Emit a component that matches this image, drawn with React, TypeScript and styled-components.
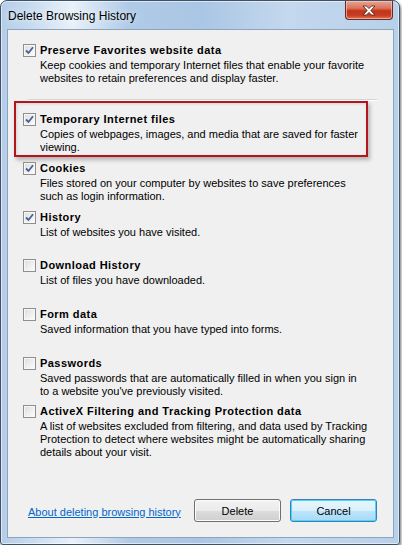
import React from "react";
import styled, { createGlobalStyle } from "styled-components";

const GlobalStyle = createGlobalStyle`
    html, body {
        margin: 0;
        padding: 0;
        background: #ffffff;
    }
    body {
        font-family: "Liberation Sans", Arial, sans-serif;
    }
`;

const Window = styled.div`
    box-sizing: border-box;
    width: 400px;
    height: 545px;
    display: flex;
    flex-direction: column;
    border: 1px solid #3e5268;
    border-radius: 7px 7px 3px 3px;
    background: linear-gradient(
        to right,
        #b4cde8 0%,
        #c9dcf0 8%,
        #e9f1f9 18%,
        #b0cbe7 32%,
        #a9c6e4 50%,
        #c4d8ee 72%,
        #b7d0ea 100%
    );
    box-shadow: 1px 2px 3px rgba(0, 0, 0, 0.55), inset 0 0 0 1px rgba(255, 255, 255, 0.55);
    overflow: hidden;
`;

const TitleBar = styled.div`
    height: 28px;
    display: flex;
    align-items: flex-start;
    justify-content: space-between;
    padding: 0 5px 0 7px;
`;

const Title = styled.div`
    font-family: "Liberation Sans", Arial, sans-serif;
    font-size: 12px;
    color: #000;
    line-height: 14px;
    margin-top: 8px;
    text-shadow: 0 0 6px rgba(255, 255, 255, 0.9);
`;

const CloseButton = styled.div`
    width: 46px;
    height: 18px;
    margin-right: 1px;
    display: flex;
    align-items: center;
    justify-content: center;
    border: 1px solid #6b2a22;
    border-top: none;
    border-radius: 0 0 4px 4px;
    background: linear-gradient(
        to bottom,
        #eaa493 0%,
        #dc735b 40%,
        #c2321a 55%,
        #c63e22 80%,
        #dc7352 100%
    );
    box-shadow: inset 0 0 0 1px rgba(255, 210, 200, 0.6);
`;

const Content = styled.div`
    flex: 1;
    margin: 0 5px 6px 6px;
    border: 1px solid #8ea4bd;
    background: #f0f0f0;
    display: flex;
    flex-direction: column;
    padding: 13px 16px 0 15px;
`;

const List = styled.div`
    display: flex;
    flex-direction: column;
`;

const Item = styled.div<{ $fixed?: boolean; $highlight?: boolean }>`
    box-sizing: border-box;
    display: grid;
    grid-template-columns: 13px 1fr;
    column-gap: 4px;
    align-content: start;
    ${(p) => (p.$fixed ? "height: 48.7px;" : "")}
    ${(p) =>
        p.$highlight
            ? `
        height: 56px;
        margin: -11px 9px 4px -9px;
        padding: 9px 0 0 7px;
        border: 2px solid #b3151d;
        box-shadow: 2px 3px 4px rgba(0, 0, 0, 0.25), inset 1px 1px 3px rgba(0, 0, 0, 0.12);
    `
            : ""}
`;

const Box = styled.div`
    width: 13px;
    height: 13px;
    margin-top: 1px;
    box-sizing: border-box;
    border: 1px solid #8f8f8f;
    background: linear-gradient(135deg, #dcdcdc 0%, #f4f4f4 70%, #ffffff 100%);
    box-shadow: inset 0 0 0 1px #f7f7f7;
    display: flex;
    align-items: center;
    justify-content: center;
`;

const Label = styled.div`
    font-size: 11px;
    font-weight: bold;
    letter-spacing: 0.45px;
    line-height: 14px;
    color: #000;
    white-space: nowrap;
`;

const Desc = styled.div`
    grid-column: 2;
    margin-top: 2px;
    font-size: 11px;
    line-height: 13px;
    color: #000;
    max-width: 327.5px;
`;

const Separator = styled.div`
    height: 1px;
    background: #d5d5d5;
    border-bottom: 1px solid #ffffff;
    margin: 14px 0 11px 5px;
`;

const Footer = styled.div`
    margin-top: auto;
    margin-bottom: 15px;
    display: flex;
    align-items: center;
    padding-left: 5px;
`;

const HelpLink = styled.a`
    font-size: 11px;
    color: #0066cc;
    text-decoration: underline;
    margin-right: auto;
    margin-top: 2px;
    cursor: pointer;
`;

const Button = styled.button<{ $default?: boolean }>`
    box-sizing: border-box;
    width: 87px;
    height: 23px;
    margin-left: 9px;
    font-family: "Liberation Sans", Arial, sans-serif;
    font-size: 11px;
    color: #000;
    border-radius: 3px;
    border: 1px solid ${(p) => (p.$default ? "#3c7fb1" : "#707070")};
    background: ${(p) =>
        p.$default
            ? "linear-gradient(to bottom, #eaf6fd 0%, #d9f0fc 50%, #bee6fd 51%, #a7d9f5 100%)"
            : "linear-gradient(to bottom, #f2f2f2 0%, #ebebeb 50%, #dddddd 51%, #cfcfcf 100%)"};
    box-shadow: inset 0 0 0 1px ${(p) => (p.$default ? "#48d7fd" : "#fcfcfc")};
    padding: 0;
`;

const CheckMark = () => (
    <svg width="9" height="9" viewBox="0 0 9 9">
        <path d="M1 4.5 L3.5 7 L8 1.2" fill="none" stroke="#4a5f97" strokeWidth="1.8" />
    </svg>
);

const CloseGlyph = () => (
    <svg width="14" height="11" viewBox="0 0 14 11">
        <path
            d="M1 1 H4.5 L7 3.6 L9.5 1 H13 L8.8 5.5 L13 10 H9.5 L7 7.4 L4.5 10 H1 L5.2 5.5 Z"
            fill="#ffffff"
            stroke="#5a2a22"
            strokeWidth="0.9"
            strokeLinejoin="round"
        />
    </svg>
);

interface IOption {
    label: string;
    desc: string;
    checked: boolean;
}

const options: IOption[] = [
    {
        label: "Cookies",
        desc: "Files stored on your computer by websites to save preferences such as login information.",
        checked: true,
    },
    { label: "History", desc: "List of websites you have visited.", checked: true },
    { label: "Download History", desc: "List of files you have downloaded.", checked: false },
    { label: "Form data", desc: "Saved information that you have typed into forms.", checked: false },
    {
        label: "Passwords",
        desc: "Saved passwords that are automatically filled in when you sign in to a website you've previously visited.",
        checked: false,
    },
    {
        label: "ActiveX Filtering and Tracking Protection data",
        desc: "A list of websites excluded from filtering, and data used by Tracking Protection to detect where websites might be automatically sharing details about your visit.",
        checked: false,
    },
];

const Option: React.FC<{ o: IOption; fixed?: boolean; highlight?: boolean }> = ({ o, fixed, highlight }) => (
    <Item $fixed={fixed} $highlight={highlight}>
        <Box>{o.checked && <CheckMark />}</Box>
        <Label>{o.label}</Label>
        <Desc>{o.desc}</Desc>
    </Item>
);

const App: React.FC = () => {
    return (
        <>
            <GlobalStyle />
            <Window>
                <TitleBar>
                    <Title>Delete Browsing History</Title>
                    <CloseButton>
                        <CloseGlyph />
                    </CloseButton>
                </TitleBar>
                <Content>
                    <List>
                        <Option
                            o={{
                                label: "Preserve Favorites website data",
                                desc: "Keep cookies and temporary Internet files that enable your favorite websites to retain preferences and display faster.",
                                checked: true,
                            }}
                        />
                        <Separator />
                        <Option
                            highlight
                            o={{
                                label: "Temporary Internet files",
                                desc: "Copies of webpages, images, and media that are saved for faster viewing.",
                                checked: true,
                            }}
                        />
                        {options.map((o) => (
                            <Option key={o.label} o={o} fixed />
                        ))}
                    </List>
                    <Footer>
                        <HelpLink>About deleting browsing history</HelpLink>
                        <Button>Delete</Button>
                        <Button $default>Cancel</Button>
                    </Footer>
                </Content>
            </Window>
        </>
    );
};

export default App;
